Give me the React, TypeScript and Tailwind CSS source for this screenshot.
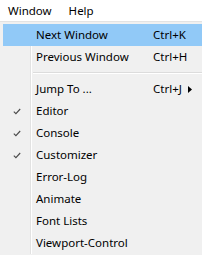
import React from "react";

type Item =
  | { sep: true }
  | { sep?: false; label: string; shortcut?: string; checked?: boolean; sub?: boolean; hi?: boolean };

const items: Item[] = [
  { label: "Next Window", shortcut: "Ctrl+K", hi: true },
  { label: "Previous Window", shortcut: "Ctrl+H" },
  { sep: true },
  { label: "Jump To ...", shortcut: "Ctrl+J", sub: true },
  { label: "Editor", checked: true },
  { label: "Console", checked: true },
  { label: "Customizer", checked: true },
  { label: "Error-Log" },
  { label: "Animate" },
  { label: "Font Lists" },
  { label: "Viewport-Control" },
];

function Check() {
  return (
    <svg width="8" height="7" viewBox="0 0 8 7" className="block">
      <path d="M0.8 3.6 L2.9 5.6 L7.2 1" fill="none" stroke="#4a4a4a" strokeWidth="1.1" />
    </svg>
  );
}

export default function App() {
  return (
    <div
      className="w-[202px] h-[255px] overflow-hidden bg-[#f0f0f0] text-[11.5px] text-[#000]"
      style={{ fontFamily: '"Segoe UI", "Noto Sans", "Open Sans", sans-serif' }}
    >
      <div className="h-[21px] bg-white flex items-center leading-none">
        <span className="ml-[8px]">Window</span>
        <span className="ml-[17px]">Help</span>
      </div>
      <div className="h-[1px] bg-[#e3e3e3]" />
      <div className="pl-[3px] pt-[2px] flex flex-col">
        {items.map((it, i) =>
          it.sep ? (
            <div key={i} className="flex h-[10px]">
              <div className="w-[28px] shrink-0 border-r border-r-[#e2e2e2]" />
              <div className="flex-1 flex flex-col justify-center pl-[1px] border-l border-l-white">
                <div className="h-[1px] bg-[#dcdcdc]" />
                <div className="h-[1px] bg-white" />
              </div>
            </div>
          ) : (
            <div key={i} className={`flex h-[22px] items-center ${it.hi ? "bg-[#91c9f7]" : ""}`}>
              <div
                className={`w-[28px] h-full shrink-0 flex items-center justify-center border-r ${
                  it.hi ? "border-r-transparent" : "border-r-[#e2e2e2]"
                }`}
              >
                {it.checked ? <Check /> : null}
              </div>
              <div className={`h-full flex items-center pl-[4px] border-l ${it.hi ? "border-l-transparent" : "border-l-white"}`}>
                <span className="w-[117px] shrink-0 whitespace-nowrap">{it.label}</span>
                {it.shortcut ? <span className="whitespace-nowrap">{it.shortcut}</span> : null}
                {it.sub ? (
                  <svg width="4" height="7" viewBox="0 0 4 7" className="ml-[6px] block">
                    <path d="M0 0 L4 3.5 L0 7 Z" fill="#000" />
                  </svg>
                ) : null}
              </div>
            </div>
          )
        )}
      </div>
    </div>
  );
}
